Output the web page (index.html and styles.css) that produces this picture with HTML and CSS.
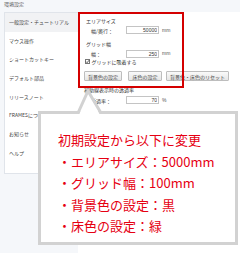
FILE: index.html
```html
<!DOCTYPE html>
<html lang="ja">
<head>
    <meta charset="UTF-8">
    <meta name="viewport" content="width=device-width, initial-scale=1.0">
    <title>環境設定</title>
    <link rel="stylesheet" href="styles.css">
</head>
<body>

<div class="top">環境設定</div>

<div class="main">
    <!-- 左メニュー -->
    <ul class="side">
        <li class="active">一般設定・チュートリアル</li>
        <li>マウス操作</li>
        <li>ショートカットキー</li>
        <li>デフォルト部品</li>
        <li>リリースノート</li>
        <li>FRAMESについて</li>
        <li>お知らせ</li>
        <li>ヘルプ</li>
    </ul>

    <!-- 設定パネル -->
    <div class="panel">
        <div class="head">エリアサイズ</div>
        <div class="row">
            <span class="label">幅/奥行：</span>
            <input class="num" type="text" value="50000" readonly>
            <span class="unit">mm</span>
        </div>

        <div class="head head-grid">グリッド幅</div>
        <div class="row row-grid">
            <span class="label">幅：</span>
            <input class="num" type="text" value="250" readonly>
            <span class="unit">mm</span>
        </div>

        <div class="check">
            <span class="box">
                <svg width="5" height="5" viewBox="0 0 5 5"><polyline points="1,2.6 2.1,3.7 4.1,1.2" fill="none" stroke="#333" stroke-width="0.8"/></svg>
            </span>
            グリッドに吸着する
        </div>

        <div class="buttons">
            <button class="btn btn-bg">背景色の設定</button>
            <button class="btn btn-floor">床色の設定</button>
            <button class="btn btn-reset">背景色・床色のリセット</button>
        </div>

        <div class="head head-alpha">補助線表示時の透過率</div>
        <div class="row row-alpha">
            <span class="label">透過率：</span>
            <input class="num" type="text" value="70" readonly>
            <span class="unit">%</span>
        </div>
    </div>

    <!-- 変更箇所の枠 -->
    <div class="mark"></div>
</div>

<!-- 吹き出し -->
<div class="callout">
    <svg class="pointer" width="32" height="28" viewBox="0 0 32 28">
        <polygon points="5,27 14,3 26,27" fill="#fff"/>
        <polyline points="4,25 14,3 27,25" fill="none" stroke="#d2d2d2" stroke-width="3"/>
    </svg>
    <p class="lead">初期設定から以下に変更</p>
    <p>・エリアサイズ：5000mm</p>
    <p>・グリッド幅：100mm</p>
    <p>・背景色の設定：黒</p>
    <p>・床色の設定：緑</p>
</div>

</body>
</html>
```

FILE: styles.css
```css
* {
    box-sizing: border-box;
}
body {
    margin: 0;
    width: 240px;
    height: 253px;
    overflow: hidden;
    background-color: #f5f7fa;
    font-family: "Noto Sans CJK JP", "Noto Sans", sans-serif;
    color: #333;
    position: relative;
}
.top {
    height: 12px;
    padding: 1px 0 0 4px;
    font-size: 5px;
    line-height: 6px;
    color: #555;
}
.main {
    display: flex;
    position: relative;
    height: 241px;
}
.side {
    list-style: none;
    margin: 0 0 0 4px;
    padding: 0 0 10px 0;
    width: 74px;
    align-self: flex-start;
    background-color: #fff;
    border: 1px solid #e0e4ea;
    border-right: none;
}
.side li {
    height: 18.7px;
    line-height: 18.7px;
    padding-left: 4px;
    font-size: 5px;
    color: #444;
    white-space: nowrap;
}
.side li.active {
    background-color: #f1f2f4;
}
.panel {
    flex: 1;
    background-color: #fff;
    padding: 5px 0 0 6px;
    font-size: 5px;
    line-height: 7px;
}
.head {
    height: 7px;
    margin-left: 2px;
    white-space: nowrap;
}
.head-grid {
    margin-top: 5.5px;
}
.head-alpha {
    margin-top: 4.5px;
    margin-left: 0;
}
.row {
    display: flex;
    align-items: center;
    height: 8px;
    margin-top: 2px;
    padding-left: 7px;
}
.row-grid {
    margin-top: 3px;
}
.row-alpha {
    margin-top: 3.5px;
}
.label {
    width: 35px;
    white-space: nowrap;
}
.num {
    width: 33px;
    height: 8px;
    margin: 0;
    padding: 0 1px;
    border: 1px solid #c4c4c4;
    font-family: "Liberation Sans", sans-serif;
    font-size: 5px;
    text-align: right;
    color: #333;
    background-color: #fff;
}
.unit {
    margin-left: 3px;
    font-family: "Liberation Sans", sans-serif;
    color: #555;
}
.check {
    display: flex;
    align-items: center;
    height: 6px;
    margin-top: 1px;
    white-space: nowrap;
}
.box {
    display: inline-block;
    width: 5px;
    height: 5px;
    margin: 0 1.5px 0 1px;
    border: 0.6px solid #777;
    background-color: #fff;
    position: relative;
}
.box svg {
    position: absolute;
    left: -0.6px;
    top: -0.6px;
}
.buttons {
    display: flex;
    margin-top: 6.5px;
    height: 10px;
}
.btn {
    height: 10px;
    margin: 0;
    padding: 0;
    border: 1px solid #bdbdbd;
    border-radius: 1px;
    background: linear-gradient(#fafafa, #e6e6e6);
    font-family: "Noto Sans CJK JP", sans-serif;
    font-size: 5px;
    color: #444;
    white-space: nowrap;
}
.btn-bg {
    width: 38px;
}
.btn-floor {
    width: 34px;
    margin-left: 6px;
}
.btn-reset {
    width: 63px;
    margin-left: 4px;
}
.mark {
    position: absolute;
    left: 78px;
    top: 0;
    width: 106px;
    height: 76px;
    border: 2px solid #d40000;
}
.callout {
    position: absolute;
    left: 38px;
    top: 111px;
    width: 200px;
    height: 134px;
    background-color: #fff;
    border: 3px solid #d2d2d2;
    padding: 15px 0 0 17px;
    color: #e60012;
    font-size: 13px;
    line-height: 21.5px;
}
.callout p {
    margin: 0;
    white-space: nowrap;
}
.pointer {
    position: absolute;
    left: 33px;
    top: -26px;
}
```
